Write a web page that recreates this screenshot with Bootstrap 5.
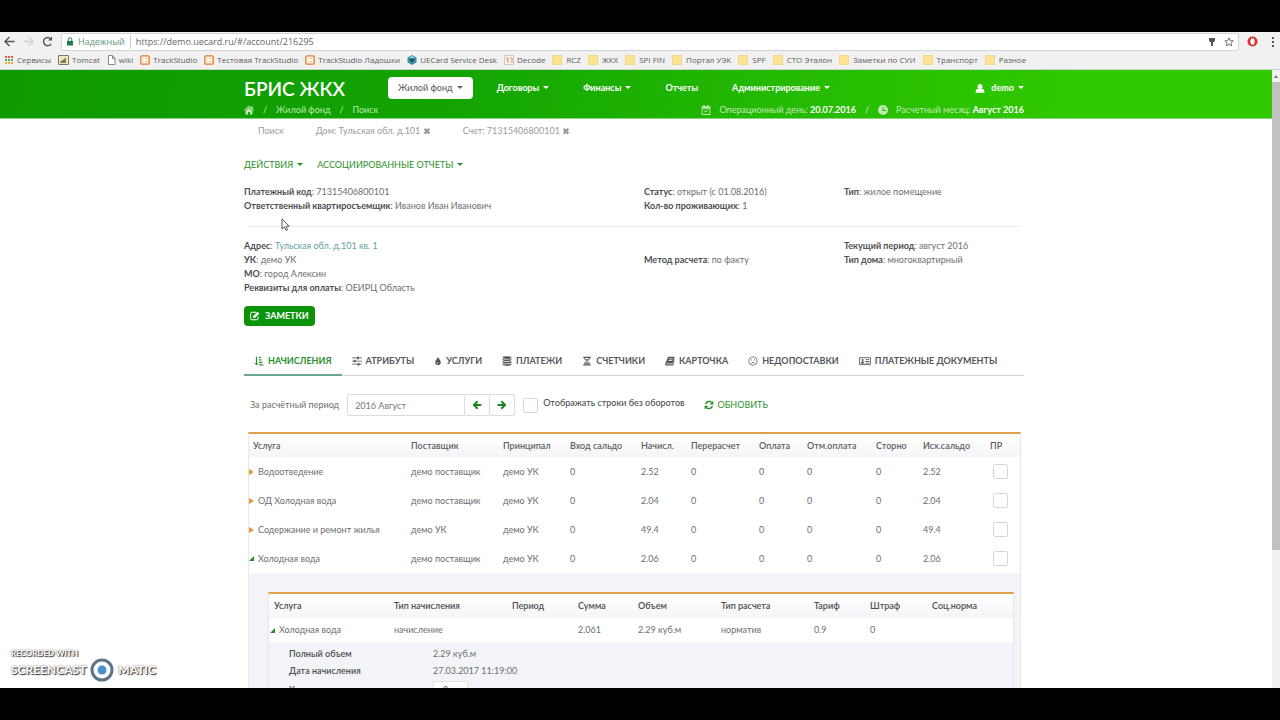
<!DOCTYPE html>
<html lang="ru">
<head>
<meta charset="utf-8">
<meta name="viewport" content="width=device-width, initial-scale=1">
<title>БРИС ЖКХ</title>
<link href="https://cdn.jsdelivr.net/npm/bootstrap@5.3.0/dist/css/bootstrap.min.css" rel="stylesheet">
<style>
:root { --ink:#6c6e70; --dark:#4c4e50; --green:#2a8f2a; --orange:#dfa04a; }
body { font-family:Lato,"Liberation Sans",sans-serif; font-size:9px; line-height:14px; color:var(--ink); background:#fff; }
a { text-decoration:none; color:inherit; }
svg { flex:none; }
svg:not([fill]) { fill:currentColor; }
.ic { width:10px; height:10px; }
.screen { height:100vh; overflow:hidden; }
.letterbox { height:32px; background:#000; flex:none; }
/* browser chrome */
.chrome { background:#f1f1f1; font-family:"Open Sans","Noto Sans",sans-serif; color:#555; flex:none; }
.addr-row { height:19px; padding:0 0 0 4px; }
.addr { background:#fff; border:1px solid #d4d4d4; border-radius:2px; height:18px; font-size:9px; padding:0 4px; min-width:0; }
.addr input { border:0; outline:0; padding:0; font-size:9px; color:#666; background:none; min-width:0; }
.secure { color:#5b9a78; border-right:1px solid #ccc; padding-right:5px; margin:0 5px 0 4px; }
.marks-row { height:19px; padding:0 4px; font-size:8px; line-height:12px; gap:7px; color:#5b5b5b; border-bottom:1px solid #c9d4c4; white-space:nowrap; }
.marks-row a { display:flex; align-items:center; gap:3px; }
.marks-row a:has(.folder) { gap:4px; }
.folder { width:10px; height:10px; background:#fbe391; border:1px solid #f0d98a; }
/* page */
.view { min-height:0; overflow:hidden; }
.sheet { min-width:0; overflow:hidden; }
.scroll { width:8px; background:#f1f1f1; flex:none; }
.scroll .thumb { height:468px; background:#c1c1c1; }
.wrap { max-width:780px; margin:0 auto; }
.off { padding-right:4px; }
.top { background:linear-gradient(100deg,#0f9a02 0%,#12a302 35%,#24b902 60%,#31c900 85%); color:#fff; height:49px; border-bottom:1px solid #8ad47e; }
.brand { font-size:19px; line-height:20px; font-weight:600; width:144px; padding-top:8px; }
.menu { height:22px; margin-top:7px; gap:14px; }
.menu button { border:0; background:none; color:#fff; font-weight:700; padding:0 10px; height:22px; border-radius:4px; line-height:14px; white-space:nowrap; }
.menu button.on { background:#fff; color:#5c665c; font-weight:500; }
.dropdown-toggle::after { margin-left:4px; vertical-align:2px; border-top-width:3px; border-left-width:3px; border-right-width:3px; }
.trail { color:#bdeab2; height:14px; margin-top:4px; }
.trail b { color:#fff; }
.slash { margin:0 9px; }
.opened { color:#9b9b9b; padding:5px 14px; gap:32px; }
.acts { padding-top:15px; gap:14px; }
.acts button { border:0; background:none; padding:0; color:var(--green); line-height:14px; }
.info { display:grid; grid-template-columns:400fr 200fr 180fr; }
.acts + .info { margin-top:13px; }
.info b { font-weight:700; color:var(--dark); }
.info a { color:#62a3a0; }
.split { border-top:1px solid #ececec; margin:13px 4px 12px; }
.notes { background:#0b940b; color:#fff; border:0; border-radius:4px; height:20px; line-height:14px; font-weight:700; padding:0 6px; margin-top:11px; display:flex; align-items:center; gap:5px; }
.tabs { margin-top:20px; height:30px; border-bottom:1px solid #d5d5d5; }
.tabs button { background:none; border:0; height:30px; padding:0 10px; color:#55585a; font-weight:700; line-height:14px; display:flex; align-items:center; gap:4px; white-space:nowrap; }
.tabs button.on { color:var(--green); border-bottom:2px solid #6aa98a; padding-top:2px; }
.filter { margin-top:18px; padding-left:6px; height:22px; }
.period { width:168px; margin-left:8px; }
.period input, .period button { border:1px solid #d9dde0; height:22px; line-height:14px; color:#777; padding:0 7px; background:#fff; border-radius:2px; }
.period input { min-width:0; }
.period button { color:#16861a; flex:0 0 26px; padding:0; display:flex; align-items:center; justify-content:center; margin-left:-1px; }
.zero { color:var(--dark); font-weight:500; padding-bottom:4px; margin-left:5px; }
.refresh { color:var(--green); display:flex; align-items:center; gap:4px; margin-left:19px; }
.form-check-input { width:15px; height:15px; margin:0; border:1px solid #cfd8dc; border-radius:2px; background-color:#fff; float:none; display:block; }
.charges { border:1px solid #e6e8ee; border-top:2px solid var(--orange); margin:16px 3px 0 4px; }
.grid { table-layout:fixed; width:100%; border-collapse:collapse; }
.grid th, .grid td { padding:0 0 0 4px; white-space:nowrap; }
.grid th { font-weight:600; color:#5d5f61; height:23px; background:linear-gradient(#fff,#f5f5f9); }
.main > tbody > tr { height:29px; }
.main td:last-child { padding-left:7px; }
.main th:nth-child(1){width:158px} .main th:nth-child(2){width:92px} .main th:nth-child(3){width:67px}
.main th:nth-child(4){width:71px} .main th:nth-child(5){width:50px} .main th:nth-child(6){width:68px}
.main th:nth-child(7){width:48px} .main th:nth-child(8){width:69px} .main th:nth-child(9){width:47px}
.main th:nth-child(10){width:67px} .main th:nth-child(11){width:34px}
.tri { width:5px; height:6px; margin-right:4px; color:#e0993c; margin-left:-4px; }
.tri.open { color:#2d8a2d; }
.nest { background:#f3f4f8; padding:19px 6px 0 19px; }
.inner { border:1px solid #e3e6ec; border-top:2px solid var(--orange); }
.sub th, .sub td { padding-left:5px; height:24px; }
.sub td { background:#fff; }
.sub th { color:var(--dark); }
.sub th:nth-child(1){width:120px} .sub th:nth-child(2){width:118px} .sub th:nth-child(3){width:66px}
.sub th:nth-child(4){width:60px} .sub th:nth-child(5){width:83px} .sub th:nth-child(6){width:93px}
.sub th:nth-child(7){width:56px} .sub th:nth-child(8){width:62px} .sub th:nth-child(9){width:86px}
.facts { display:grid; grid-template-columns:144px 1fr; row-gap:3px; padding:5px 20px; margin:0; }
.facts dt { color:var(--dark); font-weight:600; }
.facts dt label { padding-top:2px; }
.facts dd { margin:0; }
.facts input { width:35px; height:16px; border:1px solid #e3e3e3; color:#666; padding:0 9px; background:#fff; display:block; }
.stamp { position:absolute; left:11px; bottom:38px; color:#fff; text-shadow:1px 1px 1px #333,0 0 2px #555; font-weight:700; }
.stamp .s1 { font-size:8px; line-height:9px; }
.stamp .s2 { font-size:12px; line-height:24px; gap:4px; }
.pointer { position:absolute; left:281px; top:218px; }
</style>
</head>
<body>
<svg class="d-none">
<symbol id="cal" viewBox="0 0 16 16"><path d="M1 2h3V0h2v2h4V0h2v2h3v14H1zm1.500 4v8.500h11V6zM5 9.500l1-1 1.500 1.500L10.500 7l1 1-4 4z" fill-rule="evenodd"/></symbol>
<symbol id="clock" viewBox="0 0 16 16"><path d="M8 0a8 8 0 1 0 0 16A8 8 0 0 0 8 0M7.200 3h1.500v5h4v1.500H7.200z" fill-rule="evenodd"/></symbol>
<symbol id="edit" viewBox="0 0 16 16"><path d="M10 2H3a2 2 0 0 0-2 2v8a2 2 0 0 0 2 2h8a2 2 0 0 0 2-2V9" fill="none" stroke="currentColor" stroke-width="1.600"/><path d="M5 11V8l7-7 3 3-7 7z"/></symbol>
<symbol id="sort" viewBox="0 0 16 16"><path d="M3 1h2v10h2L4 15 1 11h2zM8 1h3v2H8zm0 4h4v2H8zm0 4h5.500v2H8zm0 4h7v2H8z"/></symbol>
<symbol id="slid" viewBox="0 0 16 16"><path d="M0 2.500h8V1h3v1.500h5v1.200h-5V5H8V3.700H0zM0 7.500h3V6h3v1.500h10v1.200H6V10H3V8.700H0zM0 12.500h9V11h3v1.500h4v1.200h-4V15H9v-1.300H0z"/></symbol>
<symbol id="drop" viewBox="0 0 12 16"><path d="M6 1c1 3 4.500 6 4.500 9a4.500 4.500 0 0 1-9 0C1.500 7 5 4 6 1M4 10c0 1.500 1 2.500 2 2.500V11c-.7 0-1-.5-1-1z" fill-rule="evenodd"/></symbol>
<symbol id="db" viewBox="0 0 16 16"><ellipse cx="8" cy="2.500" rx="7" ry="2.300"/><path d="M1 4.200c3 2 11 2 14 0v2.600c-3 2-11 2-14 0zM1 8c3 2 11 2 14 0v2.600c-3 2-11 2-14 0zM1 11.800c3 2 11 2 14 0V14c-3 2.500-11 2.500-14 0z"/></symbol>
<symbol id="glass" viewBox="0 0 16 16"><path d="M2 1h12v2H2zm0 12h12v2H2z"/><path d="M4 3c0 3 3 4 3 5s-3 2-3 5M12 3c0 3-3 4-3 5s3 2 3 5" fill="none" stroke="currentColor" stroke-width="1.500"/><path d="M5 5h6L8 8zm3 4 3 4H5z"/></symbol>
<symbol id="book" viewBox="0 0 16 16"><path d="M5 1h10.500L12 12H2.500c-.8 0-.8 1 0 1H12l2.500-8 1 .5L13 15H2C0 15 0 13 .500 12zm1.500 3-.4 1h6l.4-1zm-.8 2.500-.4 1h6l.4-1z" fill-rule="evenodd"/></symbol>
<symbol id="sad" viewBox="0 0 16 16"><g fill="none" stroke="currentColor" stroke-width="1.200"><circle cx="8" cy="8" r="6.500"/><path d="M5 12c1-2.500 5-2.500 6 0"/></g><circle cx="5.500" cy="6" r="1"/><circle cx="10.500" cy="6" r="1"/></symbol>
<symbol id="card" viewBox="0 0 20 16"><path d="M1 2.500h18v11.500H1z" fill="none" stroke="currentColor" stroke-width="1.500"/><circle cx="6" cy="6.500" r="1.800"/><path d="M3 12c0-4 6-4 6 0zM11 5h6v1.500h-6zm0 3h6v1.500h-6zm0 3h6v1h-6z"/></symbol>
<symbol id="sync" viewBox="0 0 16 16"><path d="M2.500 6.500a6 6 0 0 1 10-2.500M13.500 9.500a6 6 0 0 1-10 2.500" fill="none" stroke="currentColor" stroke-width="2.200"/><path d="M15 1v6H9zM1 15V9h6z"/></symbol>
<symbol id="lt" viewBox="0 0 16 16"><path d="M9 2 3 8l6 6M3.500 8H15" fill="none" stroke="currentColor" stroke-width="3"/></symbol>
<symbol id="rt" viewBox="0 0 16 16"><path d="m7 2 6 6-6 6m5.500-6H1" fill="none" stroke="currentColor" stroke-width="3"/></symbol>
<symbol id="x" viewBox="0 0 10 10"><path d="m2 1 6 6M8 1 2 7" stroke="currentColor" stroke-width="2.800"/></symbol>
<symbol id="home" viewBox="0 0 16 16"><path d="M8 1 0 8l1 1.200L8 3l7 6.200L16 8l-2-1.800V2h-2v2.400zM2.500 9 8 4.200 13.500 9v6h-4v-4h-3v4h-4z"/></symbol>
<symbol id="user" viewBox="0 0 16 16"><path d="M8 0a3.800 4.500 0 0 1 2.500 8H12c2 0 3 2 3 4.500V14H1v-1.500C1 10 2 8 4 8h1.500A3.800 4.500 0 0 1 8 0"/></symbol>
<symbol id="ts" viewBox="0 0 12 12"><rect x="1" y="1" width="10" height="10" rx="1.500" fill="#fff6ec" stroke="#e07b35" stroke-width="1.600"/><path d="M3.500 4h1M6 4h2.500M3.500 8h1M6 8h2.500" stroke="#e9a36d"/></symbol>
<symbol id="tr" viewBox="0 0 5 6"><path d="M0 0l5 3-5 3z"/></symbol>
<symbol id="to" viewBox="0 0 5 6"><path d="M5 0v5H0z"/></symbol>
</svg>

<div class="screen d-flex flex-column">
<div class="letterbox"></div>
<header class="chrome">
  <div class="addr-row d-flex align-items-center">
    <svg class="me-2" width="11" height="11" viewBox="0 0 12 12" fill="none" stroke="#555" stroke-width="1.500"><path d="M6 1 1 6l5 5M1 6h10.500"/></svg>
    <svg class="me-2" width="11" height="11" viewBox="0 0 12 12" fill="none" stroke="#d0d0d0" stroke-width="1.500"><path d="m6 1 5 5-5 5M11 6H.500"/></svg>
    <svg class="me-2" width="11" height="11" viewBox="0 0 12 12" fill="none" stroke="#555" stroke-width="1.500"><path d="M10 8.500A4.500 4.500 0 1 1 9.500 3"/><path d="M11 .500V5H6.500z" fill="#555" stroke="none"/></svg>
    <div class="addr d-flex align-items-center flex-grow-1">
      <svg width="8" height="9" viewBox="0 0 8 9" fill="#1c7d46"><path d="M1 4h6v4.500H1z"/><path d="M2.300 4V2.500a1.700 1.700 0 0 1 3.400 0V4" fill="none" stroke="#1c7d46"/></svg>
      <label for="url" class="secure">Надежный</label>
      <input id="url" class="flex-grow-1" value="https://demo.uecard.ru/#/account/216295">
      <svg class="me-2" width="8" height="10" viewBox="0 0 8 10" fill="#555"><path d="M1 1h6v3L5 5.500V9H3V5.500L1 4z"/></svg>
      <svg width="10" height="10" viewBox="0 0 12 12" fill="none" stroke="#555"><path d="m6 1 1.500 3.300 3.500.4-2.600 2.400.7 3.500L6 8.800l-3.100 1.800.7-3.500L1 4.700l3.500-.4z"/></svg>
    </div>
    <svg class="ms-2 me-2" width="11" height="11" viewBox="0 0 12 12" fill="#d8322f"><circle cx="6" cy="6" r="5.500"/><ellipse cx="6" cy="6" rx="2.300" ry="3.500" fill="#fff"/></svg>
    <svg class="ms-1 me-1" width="6" height="12" viewBox="2 0 6 12" fill="#555"><path d="M4 1h2v2H4zm0 4h2v2H4zm0 4h2v2H4z"/></svg>
  </div>
  <nav class="marks-row d-flex align-items-center">
    <a href="#"><svg width="10" height="10" viewBox="0 0 10 10"><path d="M1 1h2v2H1zm3 0h2v2H4zm3 0h2v2H7z" fill="#e2554b"/><path d="M1 4h2v2H1zm3 0h2v2H4zm3 0h2v2H7z" fill="#5ea86b"/><path d="M1 7h2v2H1zm3 0h2v2H4zm3 0h2v2H7z" fill="#e5b040"/></svg>Сервисы</a>
    <a href="#"><svg width="11" height="10" viewBox="0 0 11 10"><path d="M.5.5h10v9H.500z" fill="#efe9c8" stroke="#777"/><path d="M2 8c1-4 4-2 6-6v6z" fill="#8a7b4a"/></svg>Tomcat</a>
    <a href="#"><svg width="9" height="10" viewBox="0 0 9 10" fill="#fff" stroke="#888"><path d="M1.500.5h4l2.500 3v6H1.500zM5.500.5v3H8"/></svg>wiki</a>
    <a href="#"><svg class="ic"><use href="#ts"/></svg>TrackStudio</a>
    <a href="#"><svg class="ic"><use href="#ts"/></svg>Тестовая TrackStudio</a>
    <a href="#"><svg class="ic"><use href="#ts"/></svg>TrackStudio Ладошки</a>
    <a href="#"><svg width="10" height="10" viewBox="0 0 10 10"><path d="m5 0 4.500 2.500v5L5 10 .500 7.500v-5z" fill="#3b97a6"/><path d="M5 3 8 4 5 8 2 4z" fill="#1f4f66"/><path d="M2 2.500 5 1l3 1.500-3 1z" fill="#9ad3da"/></svg>UECard Service Desk</a>
    <a href="#"><svg width="10" height="10" viewBox="0 0 10 10"><path d="M.5.5h9v9h-9z" fill="#fbf4ea" stroke="#ccc"/><path d="M2 3h2v2H2m4-2h2v5M4 5v3" fill="none" stroke="#d99a72"/></svg>Decode</a>
    <a href="#"><i class="folder"></i>RCZ</a>
    <a href="#"><i class="folder"></i>ЖКХ</a>
    <a href="#"><i class="folder"></i>SPI FIN</a>
    <a href="#"><i class="folder"></i>Портал УЭК</a>
    <a href="#"><i class="folder"></i>SPF</a>
    <a href="#"><i class="folder"></i>СТО Эталон</a>
    <a href="#"><i class="folder"></i>Заметки по СУИ</a>
    <a href="#"><i class="folder"></i>Транспорт</a>
    <a href="#"><i class="folder"></i>Разное</a>
  </nav>
</header>

<div class="view d-flex flex-grow-1">
<main class="sheet flex-grow-1">
  <div class="top off">
    <div class="wrap">
      <div class="d-flex align-items-center">
        <div class="brand">БРИС ЖКХ</div>
        <nav class="menu d-flex flex-grow-1 align-items-center">
          <button class="on dropdown-toggle" type="button">Жилой фонд</button>
          <button class="dropdown-toggle" type="button">Договоры</button>
          <button class="dropdown-toggle" type="button">Финансы</button>
          <button type="button">Отчеты</button>
          <button class="dropdown-toggle" type="button">Администрирование</button>
          <button class="dropdown-toggle ms-auto pe-0" type="button"><svg class="ic me-1"><use href="#user"/></svg> demo</button>
        </nav>
      </div>
      <div class="trail d-flex align-items-center">
        <a href="#" aria-label="Домой" class="d-flex"><svg class="ic"><use href="#home"/></svg></a><span class="slash">/</span><a href="#">Жилой фонд</a><span class="slash">/</span><a href="#">Поиск</a>
        <svg class="ic ms-auto me-2"><use href="#cal"/></svg><span>Операционный день: <b>20.07.2016</b></span><span class="slash">/</span><svg class="ic me-2"><use href="#clock"/></svg><span>Расчетный месяц: <b>Август 2016</b></span>
      </div>
    </div>
  </div>
  <div class="off"><div class="wrap">
    <nav class="opened d-flex">
      <a href="#">Поиск</a>
      <a href="#">Дом: Тульская обл. д.101 <svg width="8" height="8"><use href="#x"/></svg></a>
      <a href="#">Счет: 71315406800101 <svg width="8" height="8"><use href="#x"/></svg></a>
    </nav>
    <div class="acts d-flex">
      <button class="dropdown-toggle" type="button">ДЕЙСТВИЯ</button>
      <button class="dropdown-toggle" type="button">АССОЦИИРОВАННЫЕ ОТЧЕТЫ</button>
    </div>
    <div class="info">
      <div><b>Платежный код</b>: 71315406800101<br><b>Ответственный квартиросъемщик</b>: Иванов Иван Иванович</div>
      <div><b>Статус</b>: открыт (с 01.08.2016)<br><b>Кол-во проживающих</b>: 1</div>
      <div><b>Тип</b>: жилое помещение</div>
    </div>
    <div class="split"></div>
    <div class="info">
      <div><b>Адрес</b>: <a href="#">Тульская обл. д.101 кв. 1</a><br><b>УК</b>: демо УК<br><b>МО</b>: город Алексин<br><b>Реквизиты для оплаты</b>: ОЕИРЦ Область</div>
      <div><br><b>Метод расчета</b>: по факту</div>
      <div><b>Текущий период</b>: август 2016<br><b>Тип дома</b>: многоквартирный</div>
    </div>
    <button class="notes" type="button"><svg class="ic"><use href="#edit"/></svg>ЗАМЕТКИ</button>
    <div class="tabs d-flex" role="tablist">
      <button class="on" type="button" role="tab"><svg class="ic"><use href="#sort"/></svg>НАЧИСЛЕНИЯ</button>
      <button type="button" role="tab"><svg class="ic"><use href="#slid"/></svg>АТРИБУТЫ</button>
      <button type="button" role="tab"><svg width="8" height="10"><use href="#drop"/></svg>УСЛУГИ</button>
      <button type="button" role="tab"><svg class="ic"><use href="#db"/></svg>ПЛАТЕЖИ</button>
      <button type="button" role="tab"><svg class="ic"><use href="#glass"/></svg>СЧЕТЧИКИ</button>
      <button type="button" role="tab"><svg class="ic"><use href="#book"/></svg>КАРТОЧКА</button>
      <button type="button" role="tab"><svg class="ic"><use href="#sad"/></svg>НЕДОПОСТАВКИ</button>
      <button type="button" role="tab"><svg width="12" height="10"><use href="#card"/></svg>ПЛАТЕЖНЫЕ ДОКУМЕНТЫ</button>
    </div>
    <div class="filter d-flex align-items-center">
      <label for="per">За расчётный период</label>
      <div class="period d-flex"><input id="per" class="flex-grow-1" value="2016 Август"><button type="button" aria-label="Назад"><svg class="ic"><use href="#lt"/></svg></button><button type="button" aria-label="Вперёд"><svg class="ic"><use href="#rt"/></svg></button></div>
      <input class="form-check-input ms-2" type="checkbox" id="zero"><label for="zero" class="zero">Отображать строки без оборотов</label>
      <a href="#" class="refresh"><svg class="ic"><use href="#sync"/></svg>ОБНОВИТЬ</a>
    </div>
    <div class="charges">
      <table class="grid main">
        <thead><tr><th>Услуга</th><th>Поставщик</th><th>Принципал</th><th>Вход сальдо</th><th>Начисл.</th><th>Перерасчет</th><th>Оплата</th><th>Отм.оплата</th><th>Сторно</th><th>Исх.сальдо</th><th>ПР</th></tr></thead>
        <tbody>
          <tr><td><svg class="tri"><use href="#tr"/></svg>Водоотведение</td><td>демо поставщик</td><td>демо УК</td><td>0</td><td>2.52</td><td>0</td><td>0</td><td>0</td><td>0</td><td>2.52</td><td><input class="form-check-input" type="checkbox" aria-label="ПР"></td></tr>
          <tr><td><svg class="tri"><use href="#tr"/></svg>ОД Холодная вода</td><td>демо поставщик</td><td>демо УК</td><td>0</td><td>2.04</td><td>0</td><td>0</td><td>0</td><td>0</td><td>2.04</td><td><input class="form-check-input" type="checkbox" aria-label="ПР"></td></tr>
          <tr><td><svg class="tri"><use href="#tr"/></svg>Содержание и ремонт жилья</td><td>демо УК</td><td>демо УК</td><td>0</td><td>49.4</td><td>0</td><td>0</td><td>0</td><td>0</td><td>49.4</td><td><input class="form-check-input" type="checkbox" aria-label="ПР"></td></tr>
          <tr><td><svg class="tri open"><use href="#to"/></svg>Холодная вода</td><td>демо поставщик</td><td>демо УК</td><td>0</td><td>2.06</td><td>0</td><td>0</td><td>0</td><td>0</td><td>2.06</td><td><input class="form-check-input" type="checkbox" aria-label="ПР"></td></tr>
        </tbody>
      </table>
      <div class="nest"><div class="inner">
        <table class="grid sub">
          <thead><tr><th>Услуга</th><th>Тип начисления</th><th>Период</th><th>Сумма</th><th>Объем</th><th>Тип расчета</th><th>Тариф</th><th>Штраф</th><th>Соц.норма</th></tr></thead>
          <tbody><tr><td><svg class="tri open"><use href="#to"/></svg>Холодная вода</td><td>начисление</td><td></td><td>2.061</td><td>2.29 куб.м</td><td>норматив</td><td>0.9</td><td>0</td><td></td></tr></tbody>
        </table>
        <dl class="facts"><dt>Полный объем</dt><dd>2.29 куб.м</dd><dt>Дата начисления</dt><dd>27.03.2017 11:19:00</dd><dt><label for="calc">Ход расчета</label></dt><dd><input id="calc" value="0"></dd></dl>
      </div></div>
    </div>
  </div></div>
</main>
<div class="scroll"><svg class="d-block" width="8" height="12" viewBox="0 0 8 12" fill="#777"><path d="m2 8 2-3 2 3z"/></svg><div class="thumb"></div></div>
</div>
<div class="letterbox"></div>
</div>

<svg class="pointer" width="9" height="14" viewBox="0 0 9 14"><path d="M1 1v10l2.300-2.200L5 12.500l1.600-.7L5 8.200h3.200z" fill="#fff" stroke="#555"/></svg>
<div class="stamp"><div class="s1">RECORDED WITH</div><div class="s2 d-flex align-items-center">SCREENCAST<svg width="24" height="24" viewBox="0 0 24 24"><circle cx="12" cy="12" r="10" fill="#fff" stroke="#5d7487" stroke-width="3"/><circle cx="12" cy="12" r="4.500" fill="#4a90cc"/></svg>MATIC</div></div>
<script src="https://cdn.jsdelivr.net/npm/bootstrap@5.3.0/dist/js/bootstrap.bundle.min.js"></script>
</body>
</html>
